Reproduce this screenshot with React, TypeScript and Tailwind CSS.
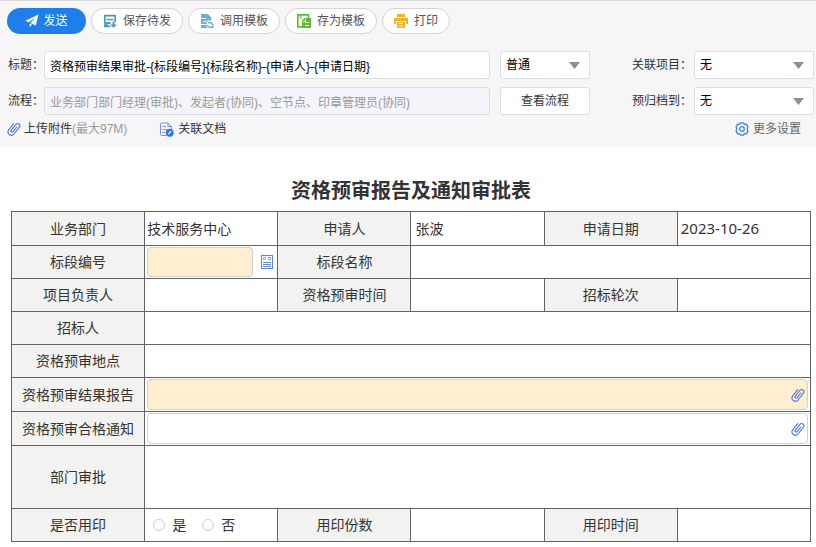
import type { ReactNode } from "react";

const SendIcon = () => (
  <svg className="h-[14px] w-[14px] shrink-0" viewBox="0 0 14 14" fill="currentColor">
    <path d="M13.5 0.5L0.3 6.8L3.8 8.2L10.6 3.4L5.4 9L10.8 11.4Z" />
    <path d="M4.4 9.4L4.9 13L7 10.4Z" />
  </svg>
);

const SaveIcon = () => (
  <svg className="h-[14px] w-[14px] shrink-0" viewBox="0 0 14 14" fill="none" stroke="#4a9ab8" strokeWidth="1.7">
    <path d="M7.5 12.4H1.8V1.6H12.2V8" />
    <path d="M3.5 5.6H10.5" strokeWidth="1.4" />
    <path d="M3.8 12V9H7.5" strokeWidth="2" />
    <path d="M10.5 7.5V11" strokeWidth="2" />
    <path d="M7.2 10.4H13.8L10.5 13.8Z" fill="#4a9ab8" stroke="none" />
  </svg>
);

const TemplateIcon = () => (
  <svg className="h-[14px] w-[14px] shrink-0" viewBox="0 0 14 14">
    <path d="M1 0H8L11 3V7L8 6L6 8L7 10L5 10.5L7.5 14H1Z" fill="#6fafcf" />
    <path d="M0 4.5H6M3 7.5H6M0 10.5H5" stroke="#fff" />
    <path d="M7.5 7.5L9 9L11 8.5L13 11V13.3H9.5L6.5 11" fill="none" stroke="#6fafcf" strokeWidth="1.4" />
  </svg>
);

const SaveTemplateIcon = () => (
  <svg className="h-[14px] w-[14px] shrink-0" viewBox="0 0 14 14">
    <path d="M5 12.8H0.8V0.9H11.4V4" fill="none" stroke="#62bb35" strokeWidth="1.7" />
    <path d="M3.2 1V4.2H5" fill="none" stroke="#62bb35" />
    <path d="M7.5 4H14V14H5V6.5Z" fill="#62bb35" />
    <path d="M8 8.5H12M8 11.5H12M8.5 5V7.5H6" fill="none" stroke="#fff" />
  </svg>
);

const PrintIcon = () => (
  <svg className="h-[14px] w-[14px] shrink-0" viewBox="0 0 14 14" fill="#f0b323">
    <path d="M3 0H11V3H3ZM0 4H14V10H12V7H2V10H0ZM3 8H11V14H3Z" />
    <path d="M5 9.5H9M5 12H9" stroke="#fff" />
  </svg>
);

const ClipIcon = () => (
  <svg className="h-[14px] w-[14px] shrink-0" viewBox="0 0 14 14" fill="none" stroke="#4a78e0" strokeWidth="1.1" strokeLinecap="round">
    <path d="M9.8 5L6.1 9.6C5.2 10.8 3.3 9.4 4.3 8.1L8.9 2.3C10.7 0 14.3 2.7 12.4 5.2L7 12C4.3 15.3 -0.9 11.4 1.7 7.9L6.6 1.7" />
  </svg>
);

const DocIcon = () => (
  <svg className="h-[15px] w-[15px] shrink-0" viewBox="0 0 15 15" fill="none" stroke="#7d8fe6">
    <path d="M7 13.5H2.5Q1.5 13.5 1.5 12.5V2Q1.5 1 2.5 1H9L12.5 4.5V7M9 1V4.5H12.5" />
    <path d="M3.5 4.5H7M3.5 7.5H8M3.5 10.5H6" />
    <circle cx="10.7" cy="10.7" r="4" fill="#2f7be0" stroke="none" />
    <path d="M9.2 12.2L12.2 9.2" stroke="#fff" strokeWidth="1.2" />
  </svg>
);

const GearIcon = () => (
  <svg className="h-[14px] w-[14px] shrink-0" viewBox="0 0 14 14" fill="none" stroke="#3f85e0" strokeWidth="1.3" strokeLinejoin="round">
    <path d="M5.6 0.8H8.4L9.3 2.4L11.4 2.2L12.9 4.6L12.2 7L12.9 9.4L11.4 11.8L9.3 11.6L8.4 13.2H5.6L4.7 11.6L2.6 11.8L1.1 9.4L1.8 7L1.1 4.6L2.6 2.2L4.7 2.4Z" />
    <circle cx="7" cy="7" r="2.3" />
  </svg>
);

const FormIcon = () => (
  <svg className="h-[14px] w-[12px]" viewBox="0 0 12 14" fill="none" stroke="#6484d8">
    <rect x="0.5" y="0.5" width="11" height="13" />
    <rect x="2.5" y="2.5" width="2" height="2" stroke="#9badea" />
    <rect x="7.5" y="2.5" width="2" height="2" stroke="#9badea" />
    <path d="M2 7.5H10M2 9.5H10M2 11.5H10" stroke="#5b8fc0" />
  </svg>
);

const tools = [
  { label: "保存待发", icon: <SaveIcon /> },
  { label: "调用模板", icon: <TemplateIcon /> },
  { label: "存为模板", icon: <SaveTemplateIcon /> },
  { label: "打印", icon: <PrintIcon /> },
];

interface DropDownProps {
  id: string;
  label: string;
  value: string;
}

const DropDown = ({ id, label, value }: DropDownProps) => (
  <div className="relative">
    <select
      id={id}
      aria-label={label}
      className="block h-7 w-full appearance-none rounded-[3px] border border-[#dcdde3] bg-white pl-[5px] text-black"
    >
      <option>{value}</option>
    </select>
    <svg className="pointer-events-none absolute top-[11px] right-[10px] h-[7px] w-[11px]" viewBox="0 0 11 7" fill="#8d8f96">
      <path d="M0 0H11L5.5 7Z" />
    </svg>
  </div>
);

const Head = ({ children }: { children: ReactNode }) => (
  <th scope="row" className="border border-[#636367] bg-[#f2f2f0] p-0 text-center font-normal">
    {children}
  </th>
);

const Cell = ({ children, span = 1 }: { children?: ReactNode; span?: number }) => (
  <td colSpan={span} className="border border-[#636367] px-[2px] py-0">
    {children}
  </td>
);

export default function App() {
  return (
    <div className="bg-white pb-1 font-['Liberation_Sans','Noto_Sans_CJK_SC',sans-serif] text-xs text-[#333]">
      <header className="border-t border-[#d9d9de] bg-[#f6f6f6] pt-[7px] pb-2">
        <div className="flex gap-[5px] pl-[7px]">
          <button className="flex h-[26px] w-[79px] items-center justify-center gap-1 rounded-full bg-[#1f7fea] text-white">
            <SendIcon />
            发送
          </button>
          {tools.map((tool) => (
            <button
              key={tool.label}
              className="flex h-[26px] items-center gap-[6px] rounded-full border border-[#d3d3d8] bg-white px-[11px] text-[#555]"
            >
              {tool.icon}
              {tool.label}
            </button>
          ))}
        </div>

        <div className="mt-[17px] grid grid-cols-[36px_1fr_90px_104px_120px] items-center gap-y-2 pr-[2px] pl-2">
          <label htmlFor="subject">标题：</label>
          <input
            id="subject"
            defaultValue="资格预审结果审批-{标段编号}{标段名称}-{申请人}-{申请日期}"
            className="mr-[10px] h-7 min-w-0 rounded-[3px] border border-[#dcdde3] bg-white px-[5px] text-black"
          />
          <DropDown id="level" label="重要程度" value="普通" />
          <label htmlFor="project" className="pl-[42px] whitespace-nowrap">关联项目：</label>
          <DropDown id="project" label="关联项目" value="无" />

          <label htmlFor="flow">流程：</label>
          <input
            id="flow"
            readOnly
            value="业务部门部门经理(审批)、发起者(协同)、空节点、印章管理员(协同)"
            className="mr-[10px] h-7 min-w-0 rounded-[3px] border border-[#dcdde3] bg-[#f4f5fa] px-[5px] text-[#999]"
          />
          <button className="h-7 rounded-[3px] border border-[#dcdde3] bg-white">查看流程</button>
          <label htmlFor="archive" className="pl-[42px] whitespace-nowrap">预归档到：</label>
          <DropDown id="archive" label="预归档到" value="无" />
        </div>

        <div className="mt-1 flex h-5 items-center pr-[15px] pl-[7px]">
          <a href="#upload" className="flex items-center gap-[3px]">
            <ClipIcon />
            <span>
              上传附件<span className="text-[#999]">(最大97M)</span>
            </span>
          </a>
          <a href="#docs" className="ml-8 flex items-center gap-1">
            <DocIcon />
            关联文档
          </a>
          <a href="#more" className="ml-auto flex items-center gap-1 text-[#666]">
            <GearIcon />
            更多设置
          </a>
        </div>
      </header>

      <main className="pt-[29px] pr-[5px] pl-[11px]">
        <h1 className="text-center text-xl leading-[30px] font-bold">资格预审报告及通知审批表</h1>
        <table className="mt-[5px] w-full table-fixed border-collapse text-sm">
          <tbody>
            <tr className="h-[34px]">
              <Head>业务部门</Head>
              <Cell>技术服务中心</Cell>
              <Head>申请人</Head>
              <Cell>
                <span className="pl-[2px]">张波</span>
              </Cell>
              <Head>申请日期</Head>
              <Cell>
                <span className="pl-px font-['Noto_Sans',sans-serif] text-[15px] leading-5">2023-10-26</span>
              </Cell>
            </tr>
            <tr className="h-[33px]">
              <Head>标段编号</Head>
              <Cell>
                <div className="flex items-center justify-between pr-[2px]">
                  <input aria-label="标段编号" className="h-[30px] w-[106px] rounded border border-[#d0d0d0] bg-[#ffeed0] px-1" />
                  <button aria-label="选择标段">
                    <FormIcon />
                  </button>
                </div>
              </Cell>
              <Head>标段名称</Head>
              <Cell span={3} />
            </tr>
            <tr className="h-[33px]">
              <Head>项目负责人</Head>
              <Cell />
              <Head>资格预审时间</Head>
              <Cell />
              <Head>招标轮次</Head>
              <Cell />
            </tr>
            <tr className="h-[33px]">
              <Head>招标人</Head>
              <Cell span={5} />
            </tr>
            <tr className="h-[33px]">
              <Head>资格预审地点</Head>
              <Cell span={5} />
            </tr>
            <tr className="h-[34px]">
              <Head>资格预审结果报告</Head>
              <Cell span={5}>
                <div className="flex h-[31px] items-center justify-end rounded border border-[#d0d0d0] bg-[#ffeed0] pr-[2px]">
                  <button aria-label="上传资格预审结果报告">
                    <ClipIcon />
                  </button>
                </div>
              </Cell>
            </tr>
            <tr className="h-[34px]">
              <Head>资格预审合格通知</Head>
              <Cell span={5}>
                <div className="flex h-[31px] items-center justify-end rounded border border-[#d0d0d0] pr-[2px]">
                  <button aria-label="上传资格预审合格通知">
                    <ClipIcon />
                  </button>
                </div>
              </Cell>
            </tr>
            <tr className="h-[63px]">
              <Head>部门审批</Head>
              <Cell span={5} />
            </tr>
            <tr className="h-[33px]">
              <Head>是否用印</Head>
              <Cell>
                <div className="flex gap-4 pl-[6px]">
                  {["是", "否"].map((option) => (
                    <label key={option} className="flex items-center gap-[7px]">
                      <input type="radio" name="seal" className="h-3 w-3 appearance-none rounded-full border border-[#ccc] bg-white checked:border-4 checked:border-[#1f7fea]" />
                      {option}
                    </label>
                  ))}
                </div>
              </Cell>
              <Head>用印份数</Head>
              <Cell />
              <Head>用印时间</Head>
              <Cell />
            </tr>
          </tbody>
        </table>
      </main>
    </div>
  );
}
